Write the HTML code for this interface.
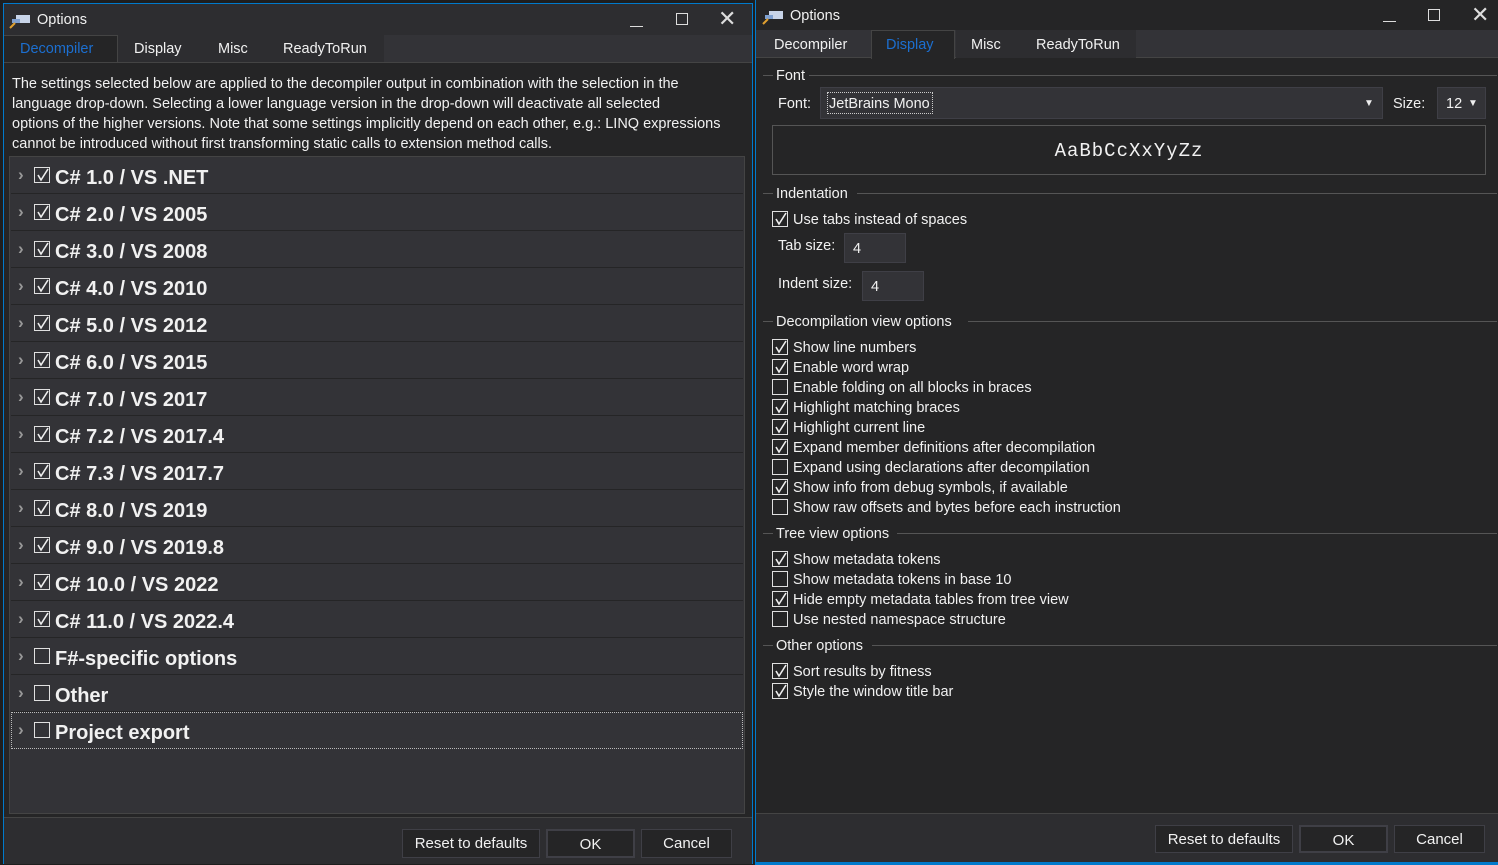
<!DOCTYPE html>
<html><head><meta charset="utf-8"><style>
*{box-sizing:border-box;margin:0;padding:0}
body{width:1498px;height:864px;background:#1e1e1e;font-family:"Liberation Sans",sans-serif;color:#f1f1f1;position:relative;overflow:hidden;font-size:14.5px}
.a{position:absolute}
.win{position:absolute;background:#252526;border:1px solid #007acc}
.cb{position:absolute;width:16px;height:16px;border:1px solid #e0e0e0;background:#252526}
.cb svg{position:absolute;left:1px;top:0}
.btn{position:absolute;background:#252526;border:1px solid #3f3f46;color:#f1f1f1;text-align:center;font-size:15px;line-height:27px}
.row{position:absolute;left:11px;width:732px;height:37px;border-bottom:1px solid #252526}
.row .t{position:absolute;left:44px;top:10px;font-weight:bold;font-size:20px;color:#f1f1f1}
.row .ar{position:absolute;left:7px;top:8px;color:#999;font-size:17px;font-weight:bold}
.row .cb{left:23px;top:10px;background:#333337}
.grp{position:absolute;height:1px;background:#555}
.lbl{position:absolute;font-size:14.5px;color:#f1f1f1}
.opt{position:absolute;left:772px;font-size:14.5px}
.opt .cb{left:0;top:0}
.opt span{position:absolute;left:21px;top:1px;white-space:nowrap}
.tb{position:absolute;background:#333337;border:1px solid #3f3f46;font-size:14.5px;padding-left:8px}
</style></head><body>
<!-- left window -->
<div class="win" style="left:3px;top:3px;width:750px;height:861px;border-bottom:none"></div>
<div class="a" style="left:4px;top:4px;width:748px;height:31px;background:#2d2d30"></div>
<svg class="a" style="left:9px;top:13px" width="22" height="16"><rect x="7" y="2" width="14" height="8" fill="#c8d4e8"/><rect x="3" y="6" width="8" height="4" fill="#7fa0d0"/><path d="M1 15 L6 10" stroke="#e0a030" stroke-width="2"/></svg>
<div class="lbl" style="left:37px;top:12px">Options</div>
<div class="a" style="left:630px;top:26px;width:13px;height:1px;background:#ddd"></div>
<div class="a" style="left:676px;top:13px;width:12px;height:12px;border:1px solid #ddd"></div>
<div class="a" style="left:718px;top:6px;font-size:22px;color:#ddd;font-weight:300">✕</div>
<div class="a" style="left:4px;top:35px;width:748px;height:28px;background:#333337"></div>
<div class="a" style="left:4px;top:35px;width:114px;height:28px;background:#252526;border-right:1px solid #444;border-top:1px solid #444"></div>
<div class="lbl" style="left:20px;top:41px;color:#1c6fd0">Decompiler</div>
<div class="a" style="left:118px;top:35px;width:266px;height:27px;background:#2d2d30"></div>
<div class="lbl" style="left:134px;top:41px">Display</div>
<div class="lbl" style="left:218px;top:41px">Misc</div>
<div class="lbl" style="left:283px;top:41px">ReadyToRun</div>
<div class="a" style="left:4px;top:62px;width:748px;height:1px;background:#444"></div>
<div class="a" style="left:12px;top:74px;width:740px;line-height:20px;font-size:14.5px;color:#f1f1f1;white-space:nowrap">The settings selected below are applied to the decompiler output in combination with the selection in the<br>language drop-down. Selecting a lower language version in the drop-down will deactivate all selected<br>options of the higher versions. Note that some settings implicitly depend on each other, e.g.: LINQ expressions<br>cannot be introduced without first transforming static calls to extension method calls.</div>
<div class="a" style="left:9px;top:156px;width:736px;height:658px;background:#333337;border:1px solid #444"></div>
<div class="row" style="top:157px"><span class="ar">›</span><div class="cb"><svg width="14" height="14"><path d="M2 7 L5 12 L12 1" stroke="#eee" stroke-width="1.6" fill="none"/></svg></div><span class="t">C# 1.0 / VS .NET</span></div>
<div class="row" style="top:194px"><span class="ar">›</span><div class="cb"><svg width="14" height="14"><path d="M2 7 L5 12 L12 1" stroke="#eee" stroke-width="1.6" fill="none"/></svg></div><span class="t">C# 2.0 / VS 2005</span></div>
<div class="row" style="top:231px"><span class="ar">›</span><div class="cb"><svg width="14" height="14"><path d="M2 7 L5 12 L12 1" stroke="#eee" stroke-width="1.6" fill="none"/></svg></div><span class="t">C# 3.0 / VS 2008</span></div>
<div class="row" style="top:268px"><span class="ar">›</span><div class="cb"><svg width="14" height="14"><path d="M2 7 L5 12 L12 1" stroke="#eee" stroke-width="1.6" fill="none"/></svg></div><span class="t">C# 4.0 / VS 2010</span></div>
<div class="row" style="top:305px"><span class="ar">›</span><div class="cb"><svg width="14" height="14"><path d="M2 7 L5 12 L12 1" stroke="#eee" stroke-width="1.6" fill="none"/></svg></div><span class="t">C# 5.0 / VS 2012</span></div>
<div class="row" style="top:342px"><span class="ar">›</span><div class="cb"><svg width="14" height="14"><path d="M2 7 L5 12 L12 1" stroke="#eee" stroke-width="1.6" fill="none"/></svg></div><span class="t">C# 6.0 / VS 2015</span></div>
<div class="row" style="top:379px"><span class="ar">›</span><div class="cb"><svg width="14" height="14"><path d="M2 7 L5 12 L12 1" stroke="#eee" stroke-width="1.6" fill="none"/></svg></div><span class="t">C# 7.0 / VS 2017</span></div>
<div class="row" style="top:416px"><span class="ar">›</span><div class="cb"><svg width="14" height="14"><path d="M2 7 L5 12 L12 1" stroke="#eee" stroke-width="1.6" fill="none"/></svg></div><span class="t">C# 7.2 / VS 2017.4</span></div>
<div class="row" style="top:453px"><span class="ar">›</span><div class="cb"><svg width="14" height="14"><path d="M2 7 L5 12 L12 1" stroke="#eee" stroke-width="1.6" fill="none"/></svg></div><span class="t">C# 7.3 / VS 2017.7</span></div>
<div class="row" style="top:490px"><span class="ar">›</span><div class="cb"><svg width="14" height="14"><path d="M2 7 L5 12 L12 1" stroke="#eee" stroke-width="1.6" fill="none"/></svg></div><span class="t">C# 8.0 / VS 2019</span></div>
<div class="row" style="top:527px"><span class="ar">›</span><div class="cb"><svg width="14" height="14"><path d="M2 7 L5 12 L12 1" stroke="#eee" stroke-width="1.6" fill="none"/></svg></div><span class="t">C# 9.0 / VS 2019.8</span></div>
<div class="row" style="top:564px"><span class="ar">›</span><div class="cb"><svg width="14" height="14"><path d="M2 7 L5 12 L12 1" stroke="#eee" stroke-width="1.6" fill="none"/></svg></div><span class="t">C# 10.0 / VS 2022</span></div>
<div class="row" style="top:601px"><span class="ar">›</span><div class="cb"><svg width="14" height="14"><path d="M2 7 L5 12 L12 1" stroke="#eee" stroke-width="1.6" fill="none"/></svg></div><span class="t">C# 11.0 / VS 2022.4</span></div>
<div class="row" style="top:638px"><span class="ar">›</span><div class="cb"></div><span class="t">F#-specific options</span></div>
<div class="row" style="top:675px"><span class="ar">›</span><div class="cb"></div><span class="t">Other</span></div>
<div class="row" style="top:712px;border:1px dotted #bbb;height:37px"><span class="ar" style="left:6px;top:7px">›</span><div class="cb" style="left:22px;top:9px"></div><span class="t" style="left:43px;top:9px">Project export</span></div>
<div class="a" style="left:4px;top:817px;width:748px;height:47px;background:#2d2d30;border-top:1px solid #444"></div>
<div class="btn" style="left:402px;top:829px;width:138px;height:29px">Reset to defaults</div>
<div class="btn" style="left:546px;top:829px;width:89px;height:29px;border:2px solid #3f3f46">OK</div>
<div class="btn" style="left:641px;top:829px;width:91px;height:29px">Cancel</div>

<!-- right window -->
<div class="win" style="left:755px;top:-1px;width:745px;height:866px;border-right:none"></div>
<div class="a" style="left:756px;top:0;width:742px;height:30px;background:#252526"></div>
<svg class="a" style="left:762px;top:9px" width="22" height="16"><rect x="7" y="2" width="14" height="8" fill="#c8d4e8"/><rect x="3" y="6" width="8" height="4" fill="#7fa0d0"/><path d="M1 15 L6 10" stroke="#e0a030" stroke-width="2"/></svg>
<div class="lbl" style="left:790px;top:8px">Options</div>
<div class="a" style="left:1383px;top:21px;width:13px;height:1px;background:#ddd"></div>
<div class="a" style="left:1428px;top:9px;width:12px;height:12px;border:1px solid #ddd"></div>
<div class="a" style="left:1471px;top:2px;font-size:22px;color:#ddd">✕</div>
<div class="a" style="left:756px;top:30px;width:742px;height:28px;background:#333337;border-bottom:1px solid #444"></div>
<div class="a" style="left:871px;top:30px;width:84px;height:29px;background:#252526;border:1px solid #444;border-bottom:none"></div>
<div class="lbl" style="left:774px;top:37px">Decompiler</div>
<div class="lbl" style="left:886px;top:37px;color:#1c6fd0">Display</div>
<div class="a" style="left:956px;top:30px;width:180px;height:28px;background:#2d2d30"></div>
<div class="lbl" style="left:971px;top:37px">Misc</div>
<div class="lbl" style="left:1036px;top:37px">ReadyToRun</div>

<div class="grp" style="left:763px;top:75px;width:10px"></div><div class="lbl" style="left:776px;top:68px">Font</div><div class="grp" style="left:809px;top:75px;width:688px"></div>
<div class="lbl" style="left:778px;top:96px">Font:</div>
<div class="tb" style="left:820px;top:87px;width:563px;height:32px"></div>
<div class="a" style="left:827px;top:92px;width:106px;height:22px;border:1px dotted #ccc"></div>
<div class="lbl" style="left:829px;top:96px">JetBrains Mono</div>
<div class="a" style="left:1364px;top:98px;font-size:10px;color:#eee">▼</div>
<div class="lbl" style="left:1393px;top:96px">Size:</div>
<div class="tb" style="left:1437px;top:87px;width:49px;height:32px;padding-top:8px">12</div>
<div class="a" style="left:1468px;top:98px;font-size:10px;color:#eee">▼</div>
<div class="a" style="left:772px;top:125px;width:714px;height:50px;border:1px solid #555;text-align:center;font-family:'Liberation Mono',monospace;font-size:19px;line-height:50px;letter-spacing:1px">AaBbCcXxYyZz</div>

<div class="grp" style="left:763px;top:193px;width:10px"></div><div class="lbl" style="left:776px;top:186px">Indentation</div><div class="grp" style="left:857px;top:193px;width:640px"></div>
<div class="opt" style="top:211px"><div class="cb"><svg width="14" height="14"><path d="M2 7 L5 12 L12 1" stroke="#eee" stroke-width="1.6" fill="none"/></svg></div><span>Use tabs instead of spaces</span></div>
<div class="lbl" style="left:778px;top:238px">Tab size:</div>
<div class="tb" style="left:844px;top:233px;width:62px;height:30px;padding-top:7px">4</div>
<div class="lbl" style="left:778px;top:276px">Indent size:</div>
<div class="tb" style="left:862px;top:271px;width:62px;height:30px;padding-top:7px">4</div>

<div class="grp" style="left:763px;top:321px;width:10px"></div><div class="lbl" style="left:776px;top:314px">Decompilation view options</div><div class="grp" style="left:968px;top:321px;width:529px"></div>
<div class="opt" style="top:339px"><div class="cb"><svg width="14" height="14"><path d="M2 7 L5 12 L12 1" stroke="#eee" stroke-width="1.6" fill="none"/></svg></div><span>Show line numbers</span></div>
<div class="opt" style="top:359px"><div class="cb"><svg width="14" height="14"><path d="M2 7 L5 12 L12 1" stroke="#eee" stroke-width="1.6" fill="none"/></svg></div><span>Enable word wrap</span></div>
<div class="opt" style="top:379px"><div class="cb"></div><span>Enable folding on all blocks in braces</span></div>
<div class="opt" style="top:399px"><div class="cb"><svg width="14" height="14"><path d="M2 7 L5 12 L12 1" stroke="#eee" stroke-width="1.6" fill="none"/></svg></div><span>Highlight matching braces</span></div>
<div class="opt" style="top:419px"><div class="cb"><svg width="14" height="14"><path d="M2 7 L5 12 L12 1" stroke="#eee" stroke-width="1.6" fill="none"/></svg></div><span>Highlight current line</span></div>
<div class="opt" style="top:439px"><div class="cb"><svg width="14" height="14"><path d="M2 7 L5 12 L12 1" stroke="#eee" stroke-width="1.6" fill="none"/></svg></div><span>Expand member definitions after decompilation</span></div>
<div class="opt" style="top:459px"><div class="cb"></div><span>Expand using declarations after decompilation</span></div>
<div class="opt" style="top:479px"><div class="cb"><svg width="14" height="14"><path d="M2 7 L5 12 L12 1" stroke="#eee" stroke-width="1.6" fill="none"/></svg></div><span>Show info from debug symbols, if available</span></div>
<div class="opt" style="top:499px"><div class="cb"></div><span>Show raw offsets and bytes before each instruction</span></div>

<div class="grp" style="left:763px;top:533px;width:10px"></div><div class="lbl" style="left:776px;top:526px">Tree view options</div><div class="grp" style="left:897px;top:533px;width:600px"></div>
<div class="opt" style="top:551px"><div class="cb"><svg width="14" height="14"><path d="M2 7 L5 12 L12 1" stroke="#eee" stroke-width="1.6" fill="none"/></svg></div><span>Show metadata tokens</span></div>
<div class="opt" style="top:571px"><div class="cb"></div><span>Show metadata tokens in base 10</span></div>
<div class="opt" style="top:591px"><div class="cb"><svg width="14" height="14"><path d="M2 7 L5 12 L12 1" stroke="#eee" stroke-width="1.6" fill="none"/></svg></div><span>Hide empty metadata tables from tree view</span></div>
<div class="opt" style="top:611px"><div class="cb"></div><span>Use nested namespace structure</span></div>

<div class="grp" style="left:763px;top:645px;width:10px"></div><div class="lbl" style="left:776px;top:638px">Other options</div><div class="grp" style="left:872px;top:645px;width:625px"></div>
<div class="opt" style="top:663px"><div class="cb"><svg width="14" height="14"><path d="M2 7 L5 12 L12 1" stroke="#eee" stroke-width="1.6" fill="none"/></svg></div><span>Sort results by fitness</span></div>
<div class="opt" style="top:683px"><div class="cb"><svg width="14" height="14"><path d="M2 7 L5 12 L12 1" stroke="#eee" stroke-width="1.6" fill="none"/></svg></div><span>Style the window title bar</span></div>

<div class="a" style="left:756px;top:813px;width:742px;height:51px;background:#2d2d30;border-top:1px solid #444"></div>
<div class="btn" style="left:1155px;top:825px;width:138px;height:28px">Reset to defaults</div>
<div class="btn" style="left:1299px;top:825px;width:89px;height:28px;border:2px solid #3f3f46">OK</div>
<div class="btn" style="left:1394px;top:825px;width:91px;height:28px">Cancel</div>
<div class="a" style="left:756px;top:862px;width:742px;height:2px;background:#007acc"></div>
</body></html>
